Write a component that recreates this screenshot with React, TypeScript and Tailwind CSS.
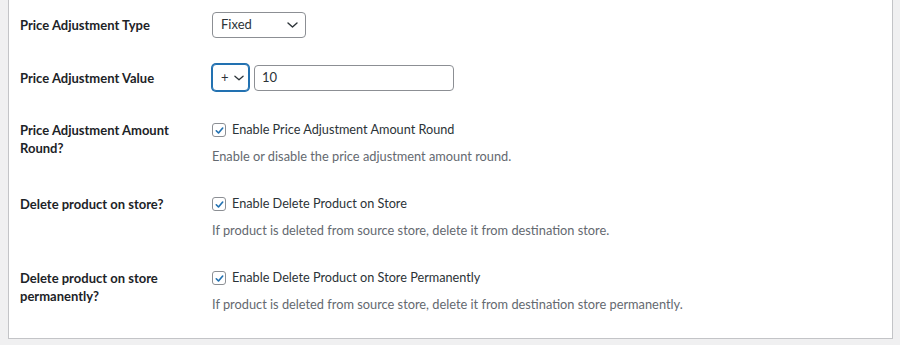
import React from "react";

const font = { fontFamily: "Lato, 'Noto Sans', sans-serif" };

function Chevron({ className }: { className?: string }) {
  return (
    <svg viewBox="0 0 11 6" className={className} fill="none" stroke="#2c3338" strokeWidth="1.4" strokeLinecap="round" strokeLinejoin="round">
      <path d="M1 1l4.5 4 4.5-4" />
    </svg>
  );
}

function Check() {
  return (
    <span className="flex h-[14px] w-[14px] shrink-0 items-center justify-center rounded-[3px] border border-[#8c8f94] bg-white">
      <svg viewBox="0 0 12 12" className="h-[11px] w-[11px]" fill="none" stroke="#2271b1" strokeWidth="1.8" strokeLinecap="round" strokeLinejoin="round">
        <path d="M2.5 6.3l2.4 2.4 4.6-5.4" />
      </svg>
    </span>
  );
}

function Label({ children, className = "" }: { children: React.ReactNode; className?: string }) {
  return (
    <div className={`w-[192px] shrink-0 pr-[10px] text-[13px] font-bold leading-[17.5px] text-[#1d2327] ${className}`}>
      {children}
    </div>
  );
}

function CheckRow({ label, text, desc, mt }: { label: React.ReactNode; text: string; desc: string; mt: string }) {
  return (
    <div className={`flex ${mt}`}>
      <Label className="pt-[2px]">{label}</Label>
      <div className="flex flex-col">
        <div className="flex h-[20px] items-center gap-[6px] text-[12.7px] text-[#2c3338]">
          <Check />
          <span>{text}</span>
        </div>
        <div className="mt-[6px] h-[20px] text-[12.8px] leading-[20px] text-[#646970]">{desc}</div>
      </div>
    </div>
  );
}

export default function App() {
  return (
    <div className="h-[345px] w-[900px] bg-[#f0f0f1]" style={font}>
      <div className="ml-[8px] h-[339px] w-[885px] border-x border-b border-[#c3c4c7] bg-white pl-[11px]">
        <div className="flex items-center pt-[12px]">
          <Label className="pt-[2px]">Price Adjustment Type</Label>
          <div className="flex h-[26px] w-[94px] items-center justify-between rounded-[4px] border border-[#8c8f94] bg-white pl-[8px] pr-[7px] text-[13px] text-[#2c3338]">
            <span>Fixed</span>
            <Chevron className="h-[6px] w-[11px]" />
          </div>
        </div>
        <div className="mt-[26px] flex items-center">
          <Label className="pt-[2px]">Price Adjustment Value</Label>
          <div className="flex items-center gap-[5px]">
            <div className="flex h-[27px] w-[37px] items-center gap-[5px] rounded-[4px] border border-[#2271b1] bg-white pl-[8px] text-[13px] text-[#2c3338] shadow-[0_0_0_1px_#2271b1]">
              <span>+</span>
              <Chevron className="h-[6px] w-[10px]" />
            </div>
            <div className="flex h-[26px] w-[200px] items-center rounded-[4px] border border-[#8c8f94] bg-white pl-[7px] text-[13px] text-[#2c3338]">
              10
            </div>
          </div>
        </div>
        <CheckRow
          mt="mt-[29px]"
          label={<>Price Adjustment Amount<br />Round?</>}
          text="Enable Price Adjustment Amount Round"
          desc="Enable or disable the price adjustment amount round."
        />
        <CheckRow
          mt="mt-[28px]"
          label="Delete product on store?"
          text="Enable Delete Product on Store"
          desc="If product is deleted from source store, delete it from destination store."
        />
        <CheckRow
          mt="mt-[28px]"
          label={<>Delete product on store<br />permanently?</>}
          text="Enable Delete Product on Store Permanently"
          desc="If product is deleted from source store, delete it from destination store permanently."
        />
      </div>
    </div>
  );
}
